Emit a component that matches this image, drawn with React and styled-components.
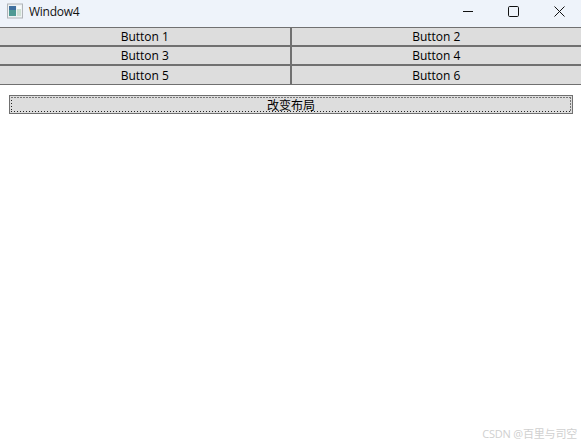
import React from 'react'
import styled, { createGlobalStyle } from 'styled-components'

const GlobalStyle = createGlobalStyle`
  html, body {
    margin: 0;
    padding: 0;
    background: #fff;
  }
`

const Window = styled.div`
  position: relative;
  width: 581px;
  height: 444px;
  overflow: hidden;
  background: #fff;
  font-family: "Open Sans", "Noto Sans", "Noto Sans CJK SC", sans-serif;
  font-size: 12px;
  color: #000;
`

const TitleBar = styled.div`
  display: flex;
  align-items: flex-start;
  box-sizing: border-box;
  height: 27px;
  background: #eef3fa;
`

const AppIcon = styled.svg`
  width: 16px;
  height: 16px;
  margin: 3px 0 0 7px;
  flex: none;
`

const Title = styled.span`
  margin: 3px 0 0 6px;
  flex: 1;
  font-size: 12px;
  line-height: 17px;
  letter-spacing: -0.25px;
  color: #111;
`

const CaptionButtons = styled.div`
  display: grid;
  grid-template-columns: 46px 45px 46px;
  margin-right: -1px;
  flex: none;
`

const CaptionButton = styled.div`
  display: flex;
  align-items: center;
  justify-content: center;
  height: 22px;
  svg {
    width: 11px;
    height: 11px;
    stroke: #111;
    stroke-width: 1;
    fill: none;
  }
`

const Grid = styled.div`
  display: grid;
  grid-template-columns: 1fr 1fr;
  margin: 0 -1px;
`

const GridButton = styled.div`
  display: flex;
  align-items: center;
  justify-content: center;
  box-sizing: border-box;
  height: ${p => p.$h}px;
  background: #dddddd;
  border: 1px solid #707070;
`

const ActionButton = styled.div`
  position: relative;
  display: flex;
  align-items: center;
  justify-content: center;
  box-sizing: border-box;
  height: 19px;
  margin: 10px 8px 0 9px;
  background: #dddddd;
  border: 1px solid #707070;
  &::after {
    content: '';
    position: absolute;
    inset: 1px;
    background:
      repeating-linear-gradient(90deg, #777 0 2px, transparent 2px 3px) top / 100% 1px no-repeat,
      repeating-linear-gradient(180deg, #777 0 2px, transparent 2px 3px) right / 1px 100% no-repeat,
      repeating-linear-gradient(90deg, #222 0 1px, transparent 1px 3px) bottom / 100% 1px no-repeat,
      repeating-linear-gradient(180deg, #222 0 1px, transparent 1px 3px) left / 1px 100% no-repeat;
  }
`

const Watermark = styled.div`
  position: absolute;
  right: 4px;
  bottom: 3px;
  font-size: 11px;
  letter-spacing: -0.2px;
  color: #d0d0d0;
`

const buttons = [
  { label: 'Button 1', h: 19 },
  { label: 'Button 2', h: 19 },
  { label: 'Button 3', h: 19 },
  { label: 'Button 4', h: 19 },
  { label: 'Button 5', h: 20 },
  { label: 'Button 6', h: 20 }
]

export default function App() {
  return (
    <Window>
      <GlobalStyle />
      <TitleBar>
        <AppIcon viewBox="0 0 16 16">
          <rect x="0.5" y="1" width="15" height="14" fill="#eef2f4" stroke="#b0b4b8" />
          <rect x="2" y="3" width="7" height="10" fill="#4f9a94" />
          <rect x="2" y="3" width="7" height="4" fill="#3f6f9f" />
          <rect x="10" y="3" width="4" height="3" fill="#f8fafa" />
          <rect x="10" y="6" width="4" height="7" fill="#cfe0d4" />
        </AppIcon>
        <Title>Window4</Title>
        <CaptionButtons>
          <CaptionButton>
            <svg viewBox="0 0 11 11"><path d="M0 5.5h10" /></svg>
          </CaptionButton>
          <CaptionButton>
            <svg viewBox="0 0 11 11"><rect x="0.5" y="0.5" width="10" height="10" rx="1.2" /></svg>
          </CaptionButton>
          <CaptionButton>
            <svg viewBox="0 0 11 11"><path d="M0.5 0.5l10 10M10.5 0.5l-10 10" /></svg>
          </CaptionButton>
        </CaptionButtons>
      </TitleBar>
      <Grid>
        {buttons.map(b => (
          <GridButton key={b.label} $h={b.h}>{b.label}</GridButton>
        ))}
      </Grid>
      <ActionButton>改变布局</ActionButton>
      <Watermark>CSDN @百里与司空</Watermark>
    </Window>
  )
}
